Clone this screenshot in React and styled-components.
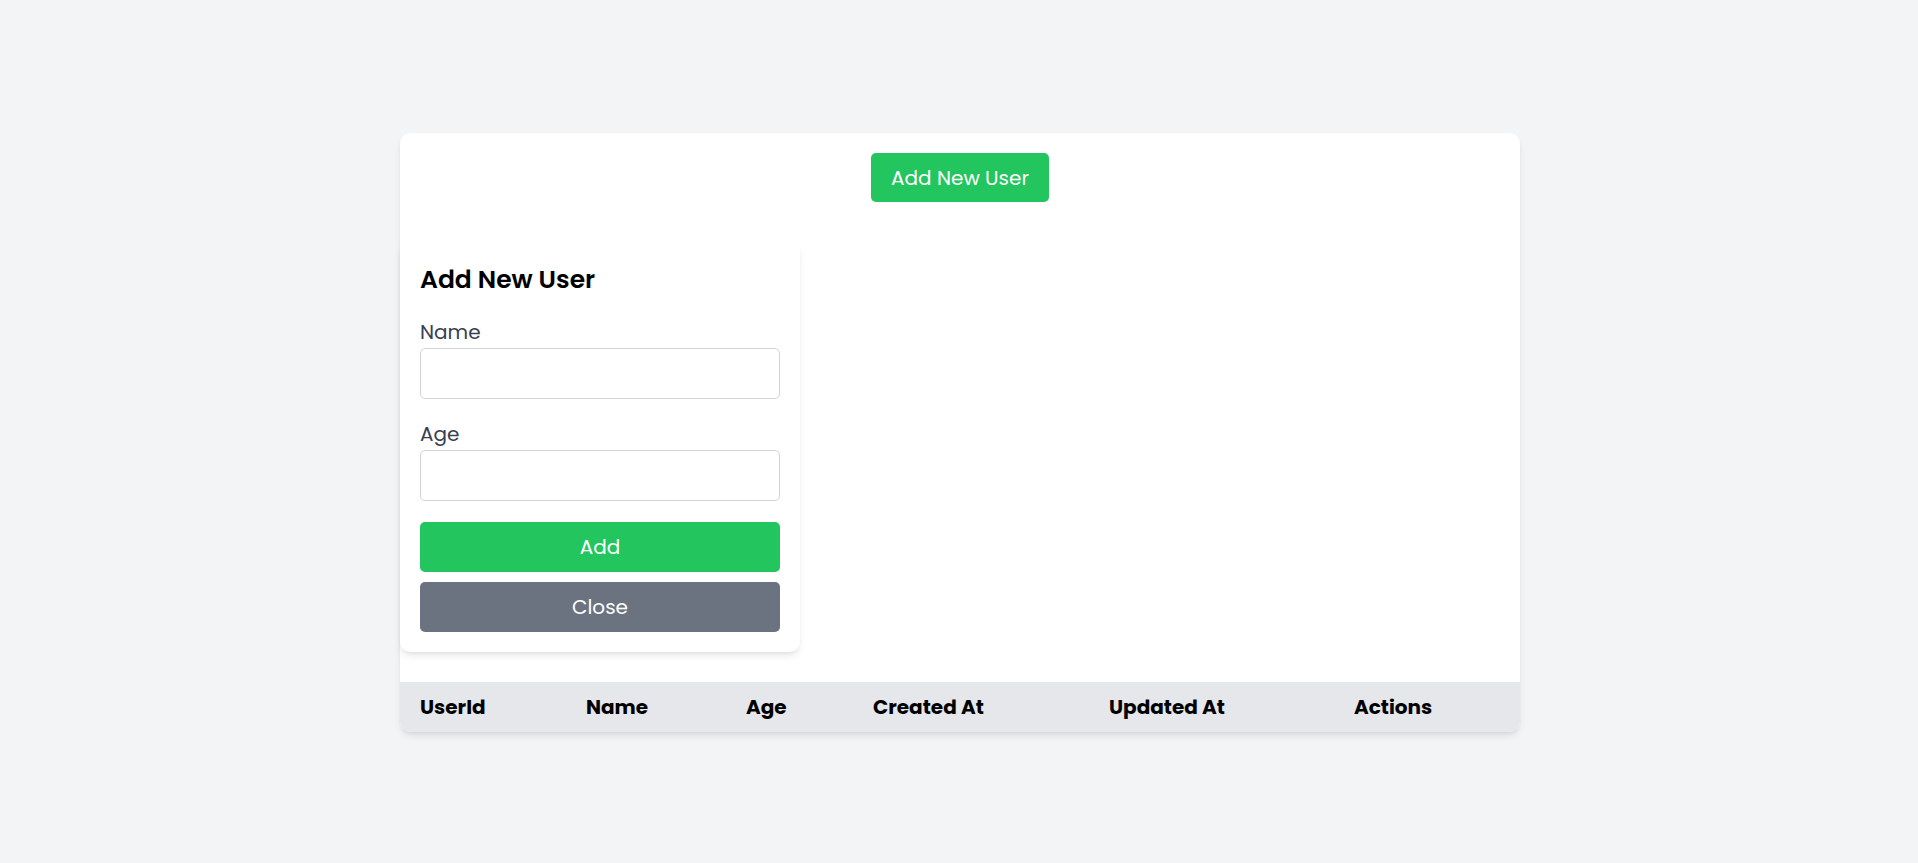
import React, { useState } from "react";
import styled, { createGlobalStyle } from "styled-components";

const GlobalStyle = createGlobalStyle`
  * {
    box-sizing: border-box;
  }
  body {
    margin: 0;
    background-color: #f3f4f6;
    font-family: "Poppins", "Open Sans", "DejaVu Sans", sans-serif;
    color: #111827;
  }
`;

const Page = styled.div`
  min-height: 100vh;
  padding: 133px 0 0 2px;
  display: flex;
  justify-content: center;
  align-items: flex-start;
`;

const Card = styled.div`
  width: 1120px;
  background-color: #ffffff;
  border-radius: 10px;
  box-shadow: 0 5px 8px -2px rgba(0, 0, 0, 0.1), 0 2px 5px -2px rgba(0, 0, 0, 0.08);
  display: flex;
  flex-direction: column;
`;

const Toolbar = styled.div`
  display: flex;
  justify-content: center;
  padding-top: 20px;
  margin-bottom: 40px;
`;

const Button = styled.button`
  border: none;
  border-radius: 5px;
  height: ${(props) => (props.block ? "50px" : "49px")};
  width: ${(props) => (props.block ? "100%" : "auto")};
  padding: 0 20px;
  font-family: inherit;
  font-size: 20px;
  line-height: 30px;
  color: #ffffff;
  cursor: pointer;
  background-color: ${(props) =>
    props.variant === "secondary" ? "#6b7280" : "#22c55e"};
`;

const Panel = styled.div`
  width: 400px;
  padding: 20px;
  background-color: #ffffff;
  border-radius: 10px;
  box-shadow: 0 5px 8px -2px rgba(0, 0, 0, 0.1), 0 2px 5px -2px rgba(0, 0, 0, 0.08);
  margin-bottom: 30px;
`;

const PanelTitle = styled.h2`
  margin: 0 0 20px 0;
  font-size: 25px;
  line-height: 35px;
  font-weight: 600;
  color: #000000;
`;

const Field = styled.div`
  display: flex;
  flex-direction: column;
  margin-bottom: 20px;
`;

const Label = styled.label`
  font-size: 20px;
  line-height: 30px;
  color: #374151;
  margin-bottom: 1px;
`;

const Input = styled.input`
  width: 100%;
  height: 51px;
  border: 1px solid #d1d5db;
  border-radius: 5px;
  padding: 0 15px;
  font-family: inherit;
  font-size: 20px;
  outline: none;
`;

const Actions = styled.div`
  display: flex;
  flex-direction: column;
  gap: 10px;
  padding-top: 1px;
`;

const HeaderRow = styled.div`
  display: grid;
  grid-template-columns: 166px 160px 127px 236px 245px 1fr;
  height: 50px;
  align-items: center;
  background-color: #e5e7eb;
  border-radius: 0 0 10px 10px;
`;

const HeaderCell = styled.div`
  padding: 0 20px;
  font-size: 20px;
  font-weight: 700;
  color: #000000;
  white-space: nowrap;
`;

const columns = ["UserId", "Name", "Age", "Created At", "Updated At", "Actions"];

export default function App() {
  const [open, setOpen] = useState(true);
  const [name, setName] = useState("");
  const [age, setAge] = useState("");

  return (
    <>
      <GlobalStyle />
      <Page>
        <Card>
          <Toolbar>
            <Button onClick={() => setOpen(true)}>Add New User</Button>
          </Toolbar>

          {open && (
            <Panel>
              <PanelTitle>Add New User</PanelTitle>
              <Field>
                <Label>Name</Label>
                <Input value={name} onChange={(e) => setName(e.target.value)} />
              </Field>
              <Field>
                <Label>Age</Label>
                <Input value={age} onChange={(e) => setAge(e.target.value)} />
              </Field>
              <Actions>
                <Button block>Add</Button>
                <Button block variant="secondary" onClick={() => setOpen(false)}>
                  Close
                </Button>
              </Actions>
            </Panel>
          )}

          <HeaderRow>
            {columns.map((col) => (
              <HeaderCell key={col}>{col}</HeaderCell>
            ))}
          </HeaderRow>
        </Card>
      </Page>
    </>
  );
}
